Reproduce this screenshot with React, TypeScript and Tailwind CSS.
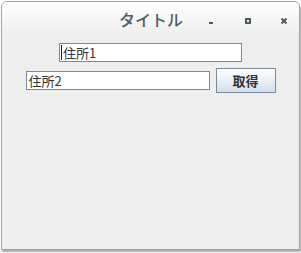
import React from "react";

const jp = "font-['Noto_Sans_CJK_JP','Noto_Sans',sans-serif]";

export default function App() {
  return (
    <div className="h-[253px] w-[301px] bg-white">
      <div className="ml-px mt-px flex h-[249px] w-[299px] flex-col overflow-hidden rounded-t-[6px] border border-[#a3a3a3] bg-[#eeeeee] shadow-[1px_2px_2px_rgba(0,0,0,0.35)]">
        {/* Title bar */}
        <div className="relative flex h-[34px] shrink-0 items-center bg-gradient-to-b from-white to-[#eeeeee]">
          <span className={`absolute left-[117px] top-[7px] text-[16px] font-medium leading-[20px] text-[#4d5d66] ${jp}`}>
            タイトル
          </span>
          <span className="absolute left-[207px] top-[20px] h-[2px] w-[4px] bg-[#4d5d66]" />
          <span className="absolute left-[243px] top-[16px] h-[6px] w-[6px] border-2 border-[#4d5d66]" />
          <svg className="absolute left-[279px] top-[16px]" width="6" height="6" viewBox="0 0 6 6">
            <path d="M0.5 0.5L5.5 5.5M5.5 0.5L0.5 5.5" stroke="#4d5d66" strokeWidth="2" />
          </svg>
        </div>

        {/* Content */}
        <div className="flex flex-col items-center gap-[6px] pt-[7px]">
          <div className="flex h-[19px] w-[183px] items-center border border-[#7a8a99] bg-white pl-px">
            <span className="mr-px h-[15px] w-px bg-[#222]" />
            <span className={`text-[13px] leading-none text-[#333] ${jp}`}>住所1</span>
          </div>
          <div className="flex items-center gap-[6px]">
            <div className="flex h-[19px] w-[184px] items-center border border-[#7a8a99] bg-white pl-[2px]">
              <span className={`text-[13px] leading-none text-[#333] ${jp}`}>住所2</span>
            </div>
            <button className={`flex h-[25px] w-[60px] items-center justify-center border border-[#7a8a99] bg-gradient-to-b from-white to-[#d3dfec] text-[13px] font-bold text-[#333] ${jp}`}>
              取得
            </button>
          </div>
        </div>
      </div>
    </div>
  );
}
